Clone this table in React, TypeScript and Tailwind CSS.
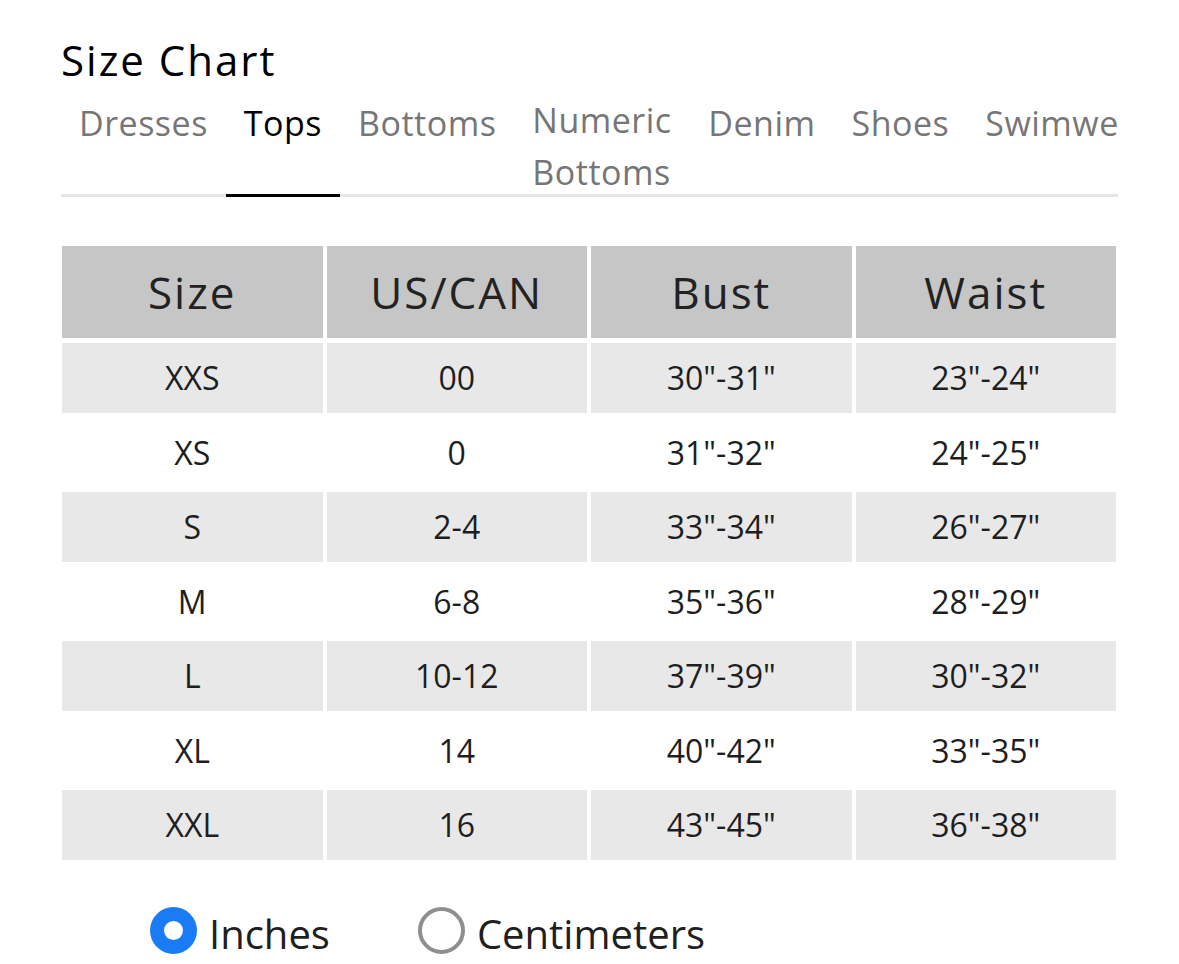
import { useState } from "react";

const tabs = ["Dresses", "Tops", "Bottoms", "Numeric Bottoms", "Denim", "Shoes", "Swimwear"];

const rows = [
  ["XXS", "00", '30"-31"', '23"-24"'],
  ["XS", "0", '31"-32"', '24"-25"'],
  ["S", "2-4", '33"-34"', '26"-27"'],
  ["M", "6-8", '35"-36"', '28"-29"'],
  ["L", "10-12", '37"-39"', '30"-32"'],
  ["XL", "14", '40"-42"', '33"-35"'],
  ["XXL", "16", '43"-45"', '36"-38"'],
];

const Radio = ({ checked, label }: { checked: boolean; label: string }) => (
  <div className="flex items-center gap-[12px]">
    {checked ? (
      <span className="w-[47px] h-[47px] rounded-full bg-[#1a7cf5] flex items-center justify-center">
        <span className="w-[19px] h-[19px] rounded-full bg-white" />
      </span>
    ) : (
      <span className="w-[47px] h-[47px] rounded-full border-[4px] border-[#8f8f8f] box-border" />
    )}
    <span className="text-[40px] text-[#1f1f1f] leading-none mt-[6px]">{label}</span>
  </div>
);

export default function App() {
  const [active] = useState("Tops");
  return (
    <div className="w-[1179px] h-[964px] overflow-hidden bg-white font-['Open_Sans',sans-serif]">
      <div className="pl-[61px] pt-[34px]">
        <h1 className="text-[42px] leading-[52px] tracking-[2px] text-black">Size Chart</h1>
        <div className="mt-[8px] w-[1057px] flex overflow-hidden">
          {tabs.map((t) => (
            <div
              key={t}
              className={`shrink-0 h-[103px] px-[18px] border-b-[3px] ${
                t === active ? "border-black text-black" : "border-[#e6e6e6] text-[#767676]"
              } ${t === "Numeric Bottoms" ? "w-[176px] whitespace-normal pt-0" : "whitespace-nowrap pt-[3px]"}`}
            >
              <span className="text-[34px] leading-[52px] tracking-[0.5px] block">{t}</span>
            </div>
          ))}
          <div className="flex-1 border-b-[3px] border-[#e6e6e6]" />
        </div>
        <div className="mt-[49px] ml-[1px] w-[1054px] grid grid-cols-4 gap-x-[4px] gap-y-[4.5px] text-center text-[#1e1e1e]">
          {["Size", "US/CAN", "Bust", "Waist"].map((h) => (
            <div
              key={h}
              className="h-[92px] bg-[#c6c6c6] flex items-center justify-center text-[44px] font-medium tracking-[2px] text-[#222] mb-[0.5px]"
            >
              {h}
            </div>
          ))}
          {rows.map((r, i) =>
            r.map((c, j) => (
              <div
                key={`${i}-${j}`}
                className={`h-[70px] flex items-center justify-center text-[32px] ${i % 2 === 0 ? "bg-[#e8e8e8]" : "bg-white"}`}
              >
                {c}
              </div>
            ))
          )}
        </div>
        <div className="mt-[47px] pl-[89px] flex items-center gap-[88px]">
          <Radio checked label="Inches" />
          <Radio checked={false} label="Centimeters" />
        </div>
      </div>
    </div>
  );
}
